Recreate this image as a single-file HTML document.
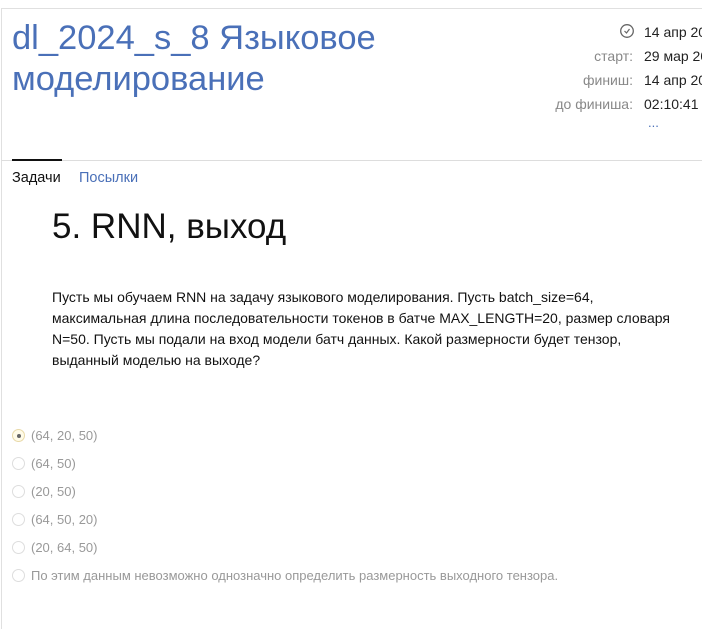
<!DOCTYPE html>
<html><head><meta charset="utf-8"><style>
body{margin:0;width:702px;height:607px;overflow:hidden;background:#fff;font-family:"Liberation Sans",sans-serif;position:relative}
.frame{position:absolute;left:1px;top:8px;width:720px;height:620px;border-left:1px solid #e0e0e0;border-top:1px solid #e0e0e0}
.title{position:absolute;left:12px;top:18px;font-size:34.5px;line-height:41px;color:#4a70b8;width:440px}
.info{position:absolute;top:20px;font-size:14px;line-height:24px}
.lab{right:69px;text-align:right;color:#888;width:120px}
.val{left:644px;color:#222;white-space:nowrap}
.hl{position:absolute;left:1px;top:160px;width:702px;height:1px;background:#ddd}
.ul{position:absolute;left:12px;top:159px;width:50px;height:2px;background:#111}
.tab{position:absolute;top:170px;font-size:14.5px}
h1{position:absolute;left:52px;top:207px;margin:0;font-weight:normal;font-size:35px;color:#111}
.p{position:absolute;left:52px;top:287px;width:630px;font-size:14px;line-height:21px;color:#111}
.opt{position:absolute;left:12px;font-size:13px;color:#999;display:flex;align-items:center}
.r{width:13px;height:13px;border:1px solid #ddd;border-radius:50%;margin-right:6px;box-sizing:border-box;position:relative}
.r.s{border-color:#e8d9a8;background:#fffbe8}
.r.s:after{content:"";position:absolute;left:3.5px;top:3.5px;width:4px;height:4px;border-radius:50%;background:#666}
</style></head><body>
<div class="frame"></div>
<div class="title">dl_2024_s_8 Языковое моделирование</div>
<svg style="position:absolute;left:619px;top:23px" width="16" height="16" viewBox="0 0 16 16"><circle cx="8" cy="8" r="6.3" fill="none" stroke="#666" stroke-width="1.3"/><path d="M5.5 8l2 2 3-4" fill="none" stroke="#666" stroke-width="1.2"/></svg>
<div class="info lab" style="top:44px">старт:<br>финиш:<br>до финиша:</div>
<div class="info val">14 апр 2024<br>29 мар 2024<br>14 апр 2024<br>02:10:41</div>
<div style="position:absolute;left:648px;top:115px;color:#4a70b8;font-size:13px">...</div>
<div class="hl"></div><div class="ul"></div>
<div class="tab" style="left:12px;color:#111">Задачи</div>
<div class="tab" style="left:79px;color:#4a70b8">Посылки</div>
<h1>5. RNN, выход</h1>
<div class="p">Пусть мы обучаем RNN на задачу языкового моделирования. Пусть batch_size=64, максимальная длина последовательности токенов в батче MAX_LENGTH=20, размер словаря N=50. Пусть мы подали на вход модели батч данных. Какой размерности будет тензор, выданный моделью на выходе?</div>
<div class="opt" style="top:428px"><span class="r s"></span>(64, 20, 50)</div>
<div class="opt" style="top:456px"><span class="r"></span>(64, 50)</div>
<div class="opt" style="top:484px"><span class="r"></span>(20, 50)</div>
<div class="opt" style="top:512px"><span class="r"></span>(64, 50, 20)</div>
<div class="opt" style="top:540px"><span class="r"></span>(20, 64, 50)</div>
<div class="opt" style="top:568px"><span class="r"></span>По этим данным невозможно однозначно определить размерность выходного тензора.</div>
</body></html>
